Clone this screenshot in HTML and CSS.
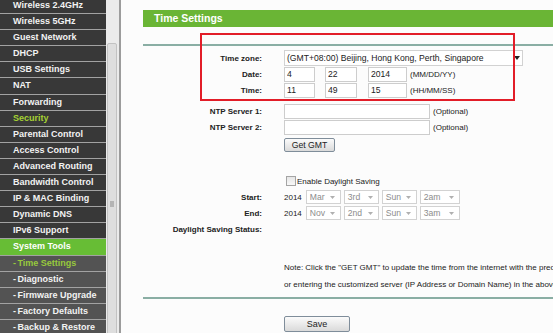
FILE: index.html
```html
<!DOCTYPE html>
<html lang="en">
<head>
  <meta charset="UTF-8">
  <meta name="viewport" content="width=device-width, initial-scale=1.0">
  <link rel="stylesheet" href="styles.css">
  <title>Time Settings</title>
</head>
<body>
<div class="page">
  <nav class="menu">
    <div class="menu-list">
      <div class="item">Wireless 2.4GHz</div>
      <div class="item">Wireless 5GHz</div>
      <div class="item">Guest Network</div>
      <div class="item">DHCP</div>
      <div class="item">USB Settings</div>
      <div class="item">NAT</div>
      <div class="item">Forwarding</div>
      <div class="item green-text">Security</div>
      <div class="item">Parental Control</div>
      <div class="item">Access Control</div>
      <div class="item">Advanced Routing</div>
      <div class="item">Bandwidth Control</div>
      <div class="item">IP &amp; MAC Binding</div>
      <div class="item">Dynamic DNS</div>
      <div class="item">IPv6 Support</div>
      <div class="item active">System Tools</div>
      <div class="item sub green-text"><span class="dash">-</span> Time Settings</div>
      <div class="item sub"><span class="dash">-</span> Diagnostic</div>
      <div class="item sub"><span class="dash">-</span> Firmware Upgrade</div>
      <div class="item sub"><span class="dash">-</span> Factory Defaults</div>
      <div class="item sub"><span class="dash">-</span> Backup &amp; Restore</div>
    </div>
  </nav>

  <div class="scroll">
    <div class="thumb"><span class="grip"></span></div>
  </div>

  <main class="content">
    <div class="title-bar">Time Settings</div>
    <div class="rule"></div>

    <div class="form">
      <div class="row first">
        <label>Time zone:</label>
        <div class="ctrl">
          <div class="select tz">
            <span>(GMT+08:00) Beijing, Hong Kong, Perth, Singapore</span>
            <svg class="arrow" width="6" height="4" viewBox="0 0 6 4"><path d="M0 0h6L3 4z" fill="#222"/></svg>
          </div>
        </div>
      </div>
      <div class="row">
        <label>Date:</label>
        <div class="ctrl">
          <input class="num w1" value="4">
          <input class="num w2" value="22">
          <input class="num w3" value="2014">
          <span class="hint">(MM/DD/YY)</span>
        </div>
      </div>
      <div class="row">
        <label>Time:</label>
        <div class="ctrl">
          <input class="num w1" value="11">
          <input class="num w2" value="49">
          <input class="num w3" value="15">
          <span class="hint">(HH/MM/SS)</span>
        </div>
      </div>
      <div class="row ntp">
        <label>NTP Server 1:</label>
        <div class="ctrl">
          <input class="server">
          <span class="hint">(Optional)</span>
        </div>
      </div>
      <div class="row">
        <label>NTP Server 2:</label>
        <div class="ctrl">
          <input class="server">
          <span class="hint">(Optional)</span>
        </div>
      </div>
      <div class="row gmt">
        <label></label>
        <div class="ctrl"><button class="btn gmt-btn">Get GMT</button></div>
      </div>

      <div class="row dst">
        <label></label>
        <div class="ctrl">
          <span class="check"></span>
          <span class="check-text">Enable Daylight Saving</span>
        </div>
      </div>
      <div class="row">
        <label>Start:</label>
        <div class="ctrl">
          <span class="year">2014</span>
          <div class="select small"><span>Mar</span><svg class="arrow" width="5" height="3" viewBox="0 0 5 3"><path d="M0 0h5L2.5 3z" fill="#b0b0b0"/></svg></div>
          <div class="select small"><span>3rd</span><svg class="arrow" width="5" height="3" viewBox="0 0 5 3"><path d="M0 0h5L2.5 3z" fill="#b0b0b0"/></svg></div>
          <div class="select small"><span>Sun</span><svg class="arrow" width="5" height="3" viewBox="0 0 5 3"><path d="M0 0h5L2.5 3z" fill="#b0b0b0"/></svg></div>
          <div class="select small wide"><span>2am</span><svg class="arrow" width="5" height="3" viewBox="0 0 5 3"><path d="M0 0h5L2.5 3z" fill="#b0b0b0"/></svg></div>
        </div>
      </div>
      <div class="row">
        <label>End:</label>
        <div class="ctrl">
          <span class="year">2014</span>
          <div class="select small"><span>Nov</span><svg class="arrow" width="5" height="3" viewBox="0 0 5 3"><path d="M0 0h5L2.5 3z" fill="#b0b0b0"/></svg></div>
          <div class="select small"><span>2nd</span><svg class="arrow" width="5" height="3" viewBox="0 0 5 3"><path d="M0 0h5L2.5 3z" fill="#b0b0b0"/></svg></div>
          <div class="select small"><span>Sun</span><svg class="arrow" width="5" height="3" viewBox="0 0 5 3"><path d="M0 0h5L2.5 3z" fill="#b0b0b0"/></svg></div>
          <div class="select small wide"><span>3am</span><svg class="arrow" width="5" height="3" viewBox="0 0 5 3"><path d="M0 0h5L2.5 3z" fill="#b0b0b0"/></svg></div>
        </div>
      </div>
      <div class="row">
        <label>Daylight Saving Status:</label>
        <div class="ctrl"></div>
      </div>

      <div class="note">
        <p>Note: Click the "GET GMT" to update the time from the internet with the predefined servers</p>
        <p>or entering the customized server (IP Address or Domain Name) in the above frames.</p>
      </div>
    </div>

    <div class="rule bottom"></div>
    <div class="save-row">
      <button class="btn save-btn">Save</button>
    </div>

    <div class="highlight"></div>
  </main>
</div>
</body>
</html>
```

FILE: styles.css
```css
  body {
    margin: 0;
    font-family: "Liberation Sans", Arial, sans-serif;
    overflow: hidden;
  }

  .page {
    display: flex;
    width: 553px;
    height: 333px;
    overflow: hidden;
  }

  /* left menu */
  .menu {
    width: 106px;
    flex-shrink: 0;
    background-color: #383838;
    overflow: hidden;
  }

  .menu-list {
    margin-top: -2px;
  }

  .item {
    height: 15.1px;
    line-height: 15px;
    padding-left: 13px;
    border-bottom: 1px solid #a2a2a2;
    color: #f2f2f2;
    font-size: 9px;
    font-weight: bold;
    white-space: nowrap;
  }

  .item.sub {
    background-color: #535353;
  }

  .item.active {
    background-color: #67bd35;
    color: #ffffff;
  }

  .green-text {
    color: #a6d133;
  }

  .item.sub.green-text {
    color: #98c93c;
  }

  .dash {
    margin-right: -1px;
  }

  /* frame scrollbar */
  .scroll {
    width: 12px;
    flex-shrink: 0;
    background-color: #ebebeb;
    border-right: 2px solid #9c9c9c;
    padding-left: 1px;
  }

  .thumb {
    display: flex;
    justify-content: center;
    width: 8px;
    height: 320px;
    margin-top: 43px;
    background-color: #dedede;
    border: 1px solid #c2c2c2;
    border-radius: 2px;
  }

  .grip {
    width: 4px;
    height: 6px;
    margin-top: 157px;
    background-color: #b4b4b4;
  }

  /* main content */
  .content {
    flex: 1;
    position: relative;
    padding-top: 10px;
    padding-left: 22px;
    background-color: #fcfcfc;
    color: #222;
  }

  .title-bar {
    height: 17px;
    line-height: 17px;
    padding-left: 11px;
    background-color: #6ab535;
    color: #ffffff;
    font-size: 10.5px;
    font-weight: bold;
  }

  .rule {
    height: 2px;
    margin-top: 17px;
    background-color: #8aaea4;
  }

  .rule.bottom {
    margin-top: 4px;
  }

  .form {
    padding-top: 4px;
  }

  .row {
    display: grid;
    grid-template-columns: 119px 1fr;
    column-gap: 22px;
    align-items: center;
    height: 16px;
  }

  .row label {
    text-align: right;
    font-size: 8px;
    font-weight: bold;
    white-space: nowrap;
  }

  .row.ntp {
    margin-top: 5px;
  }

  .row.gmt {
    margin-top: 2px;
  }

  .row.dst {
    margin-top: 20px;
  }

  .ctrl {
    display: flex;
    align-items: center;
    font-size: 8px;
    white-space: nowrap;
  }

  input {
    box-sizing: border-box;
    height: 15px;
    padding: 0 2px;
    margin: 0;
    border: 1px solid #cdcdcd;
    background-color: #ffffff;
    font-family: "Liberation Sans", Arial, sans-serif;
    font-size: 8.6px;
    color: #222;
  }

  .num.w1 {
    width: 31px;
    margin-right: 10px;
  }

  .num.w2 {
    width: 32px;
    margin-right: 11px;
  }

  .num.w3 {
    width: 39px;
  }

  .server {
    width: 146px;
  }

  .hint {
    margin-left: 3px;
  }

  .select {
    box-sizing: border-box;
    display: flex;
    align-items: center;
    justify-content: space-between;
    background-color: #ffffff;
    border: 1px solid #d2d2d2;
  }

  .select.tz {
    width: 239px;
    height: 16px;
    padding: 0 2px 0 2px;
    font-size: 8.6px;
  }

  .select.small {
    width: 35px;
    height: 14px;
    padding: 0 5px 0 3px;
    margin-right: 3px;
    font-size: 8.6px;
    color: #8c8c8c;
  }

  .select.small.wide {
    width: 40px;
  }

  .year {
    margin-right: 4px;
  }

  .btn {
    box-sizing: border-box;
    padding: 0;
    border: 1px solid #7f8d9a;
    border-radius: 2px;
    background: linear-gradient(#fbfbfb, #dadada);
    font-family: "Liberation Sans", Arial, sans-serif;
    font-size: 8.7px;
    color: #222;
  }

  .gmt-btn {
    width: 51px;
    height: 14px;
  }

  .check {
    box-sizing: border-box;
    width: 10px;
    height: 10px;
    margin-left: 2px;
    margin-right: 1px;
    border: 1px solid #a4a4a4;
    background: linear-gradient(#e6e6e6, #f8f8f8);
  }

  .check-text {
    font-size: 8px;
  }

  .note {
    margin-top: 22px;
    padding-left: 141px;
    font-size: 8px;
    white-space: nowrap;
    overflow: hidden;
  }

  .note p {
    margin: 0;
    height: 17px;
    line-height: 17px;
  }

  .save-row {
    padding-left: 141px;
    margin-top: 14px;
  }

  .save-btn {
    width: 66px;
    height: 16px;
    font-size: 9px;
  }

  /* red annotation frame */
  .highlight {
    position: absolute;
    left: 79px;
    top: 33px;
    width: 315px;
    height: 68px;
    box-sizing: border-box;
    border: 2px solid #e21d28;
  }
```
